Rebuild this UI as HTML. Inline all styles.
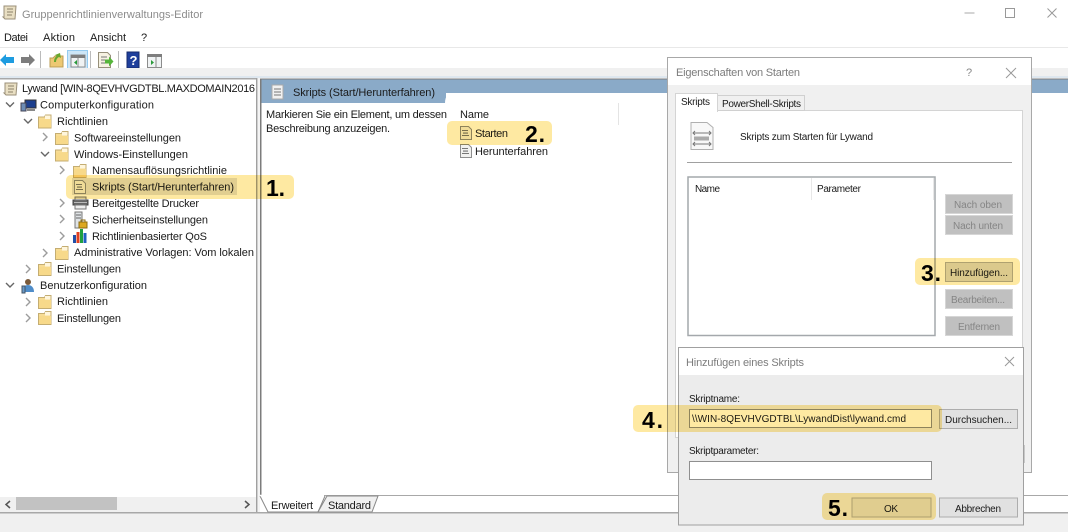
<!DOCTYPE html>
<html lang="de"><head><meta charset="utf-8"><title>Gruppenrichtlinienverwaltungs-Editor</title>
<style>
html,body{margin:0;padding:0;background:#fff;width:1068px;height:532px;overflow:hidden}
svg{display:block;filter:blur(.35px)}
text{font-family:"Liberation Sans",sans-serif;font-size:11px;fill:#1a1a1a;white-space:pre}
.d{font-size:10px}
.g{fill:#858585}
.n{font-weight:700;font-size:23px;fill:#000}
.c{fill:none;stroke:#9c9c9c;stroke-width:1.4}
.h{fill:#fee9a2;mix-blend-mode:multiply}
</style></head><body>
<svg width="1068" height="532" viewBox="0 0 1068 532" xmlns="http://www.w3.org/2000/svg">
<defs>
<g id="folder"><path d="M.5 2.500h6l1-2h5.500v13H.5z" fill="#f7dc94" stroke="#c4ad72"/><path d="M7 1h5.500v3.500H7z" fill="#fff6dc"/><path d="M1 5h12v8H1z" fill="#f7d98a"/></g>
<g id="script"><path d="M1.500.5h8l3 3v10h-11z" fill="#f1f1ef" stroke="#8e8e8e"/><path d="M3 4.500h6M3 9.500h7" stroke="#777"/><rect x="4" y="6.300" width="5" height="1.600" fill="#999"/></g>
<g id="chevR"><path d="M0 0l4 4-4 4" class="c"/></g>
<g id="chevD"><path d="M0 0l4 4 4-4" fill="none" stroke="#666" stroke-width="1.400"/></g>
</defs>

<rect width="1068" height="532" fill="#fff"/>
<!-- title -->
<path d="M4 6h12l-1 13H5l-2-2h1z" fill="#e9dfc3" stroke="#9a8f78"/><path d="M7 9h6M7 12h6M7 15h5" stroke="#8a8068"/>
<text x="22" y="18" textLength="181" style="fill:#8c8c8c">Gruppenrichtlinienverwaltungs-Editor</text>
<path d="M964.500 13h10" stroke="#aaa"/><rect x="1005.500" y="8.500" width="9" height="9" fill="none" stroke="#999"/><path d="M1047.500 8.500l9 9m0-9l-9 9" stroke="#999" fill="none"/>
<!-- menu -->
<text x="4" y="41" textLength="24">Datei</text>
<text x="43" y="41" textLength="32">Aktion</text>
<text x="90" y="41" textLength="36">Ansicht</text>
<text x="141" y="41" textLength="4">?</text>
<rect y="47" width="1068" height="1" fill="#e8e8e8"/>
<!-- toolbar -->
<path d="M0 60l6-6v3h8v6H6v3z" fill="#1e9ce0"/>
<path d="M35 60l-6-6v3h-8v6h8v3z" fill="#7d7d7d"/>
<rect x="40" y="51" width="1" height="17" fill="#bbb"/>
<path d="M50 58h3l2-2h8v11H50z" fill="#edc873" stroke="#bb9c55"/><path d="M54 62c0-3 1-5 3-6l-2-1 5-2 1 5-2-1c-2 1-3 3-3 5z" fill="#67a82e"/>
<rect x="67.500" y="50.500" width="20" height="18" fill="#cde6f7" stroke="#95cbf0"/>
<rect x="71" y="55" width="14" height="12" fill="#f0f3f4" stroke="#8c8c8c"/><rect x="71" y="55" width="14" height="3" fill="#7e7e7e"/><path d="M78 58v9" stroke="#888"/><path d="M77 60l-3 2.500 3 2.500z" fill="#2a9a3a"/>
<rect x="90" y="51" width="1" height="17" fill="#bbb"/>
<path d="M98.500 52.500h9l3 3v12h-12z" fill="#f6f2e2" stroke="#968f7a"/><path d="M101 57h6M101 60h4M101 63h4" stroke="#777"/><path d="M105 59.500h4v-3l4.500 5-4.500 5v-3h-4z" fill="#55b53a"/>
<rect x="118" y="51" width="1" height="17" fill="#bbb"/>
<rect x="127" y="52" width="12" height="16" fill="#1f3f9c" stroke="#152a6c"/><text x="129.500" y="65" style="font-size:13px;font-weight:700;fill:#fff">?</text>
<rect x="147.500" y="54.500" width="14" height="13" fill="#f0f3f4" stroke="#8c8c8c"/><rect x="147" y="54" width="15" height="3" fill="#7e7e7e"/><path d="M156 57v10" stroke="#888"/><path d="M151 60l3 2.500-3 2.500z" fill="#2a9a3a"/>
<rect y="68" width="1068" height="10" fill="#f0f0f0"/>
<rect y="76" width="1068" height="2" fill="#d6e3ee" opacity=".7"/>

<!-- left pane -->
<rect x="0" y="78" width="257" height="1.500" fill="#a8a8a8"/>
<rect x="256" y="78" width="1.500" height="435" fill="#a0a0a0"/>
<rect x="258" y="78" width="2" height="435" fill="#f4f4f4"/>
<!-- tree icons -->
<path d="M5 83h12l-1 12H6l-2-2h1z" fill="#e9dfc3" stroke="#9a8f78"/><path d="M8 86h6M8 89h6M8 92h5" stroke="#8a8068"/>
<g><rect x="25" y="100" width="11" height="8" fill="#1c3f8e" stroke="#333"/><rect x="21" y="103" width="5" height="8" fill="#6d8db5" stroke="#445"/><rect x="27" y="109" width="8" height="2" fill="#888"/></g>
<use href="#chevD" x="6" y="102.500"/>
<use href="#chevD" x="24" y="119"/>
<use href="#folder" x="38" y="114.500"/>
<text x="22" y="92" textLength="233">Lywand [WIN-8QEVHVGDTBL.MAXDOMAIN2016</text>
<text x="40" y="108.500" textLength="114">Computerkonfiguration</text>
<text x="57" y="125" textLength="51">Richtlinien</text>
<use href="#chevR" x="43" y="133"/>
<use href="#folder" x="55" y="131"/>
<text x="74" y="141.500" textLength="107">Softwareeinstellungen</text>
<use href="#chevD" x="41" y="152"/>
<use href="#folder" x="55" y="147.500"/>
<text x="74" y="158" textLength="114">Windows-Einstellungen</text>
<use href="#chevR" x="60" y="166"/>
<use href="#folder" x="73" y="164"/>
<text x="92" y="174" textLength="135">Namensauflösungsrichtlinie</text>
<rect x="72" y="178" width="165" height="17" fill="#e2e2e2"/>
<use href="#script" x="73" y="180"/>
<text x="92" y="190.500" textLength="142">Skripts (Start/Herunterfahren)</text>
<use href="#chevR" x="60" y="199"/>
<g><rect x="73" y="200" width="15" height="5" fill="#666" stroke="#444"/><rect x="75" y="197" width="11" height="3" fill="#ddd" stroke="#777"/><rect x="75" y="205" width="11" height="4" fill="#eee" stroke="#777"/><path d="M74 202.500h13" stroke="#bbb"/></g>
<text x="92" y="207" textLength="107">Bereitgestellte Drucker</text>
<use href="#chevR" x="60" y="215"/>
<g><rect x="75" y="212" width="7" height="16" fill="#dfe3e6" stroke="#777"/><path d="M76 215h5M76 218h5" stroke="#666"/><rect x="79" y="222" width="8" height="6" fill="#dca820" stroke="#8c6c10"/><path d="M81 222v-2h4v2" fill="none" stroke="#8c6c10"/></g>
<text x="92" y="223.500" textLength="116">Sicherheitseinstellungen</text>
<use href="#chevR" x="60" y="232"/>
<g><rect x="73" y="235" width="3" height="8" fill="#2050a8"/><rect x="76.500" y="232" width="3" height="11" fill="#e04020"/><rect x="80" y="229" width="3" height="14" fill="#20a040"/><rect x="83.500" y="233" width="3" height="10" fill="#2060c0"/></g>
<text x="92" y="240" textLength="115">Richtlinienbasierter QoS</text>
<use href="#chevR" x="43" y="249"/>
<use href="#folder" x="55" y="246"/>
<text x="74" y="256" textLength="180">Administrative Vorlagen: Vom lokalen</text>
<use href="#chevR" x="26" y="265"/>
<use href="#folder" x="38" y="262"/>
<text x="57" y="272.500" textLength="64">Einstellungen</text>
<use href="#chevD" x="6" y="283"/>
<g><circle cx="28" cy="282" r="3" fill="#7a5a3a"/><path d="M22 292c0-5 3-7 6-7s6 2 6 7z" fill="#4f8cc8"/><rect x="22" y="286" width="3" height="7" fill="#6a9ac8" stroke="#456"/></g>
<text x="40" y="289" textLength="107">Benutzerkonfiguration</text>
<use href="#chevR" x="26" y="298"/>
<use href="#folder" x="38" y="295"/>
<text x="57" y="305" textLength="51">Richtlinien</text>
<use href="#chevR" x="26" y="314"/>
<use href="#folder" x="38" y="311"/>
<text x="57" y="322" textLength="64">Einstellungen</text>
<!-- scrollbar -->
<rect x="0" y="497" width="256" height="15" fill="#f0f0f0"/>
<rect x="16" y="497" width="101" height="13" fill="#c2c2c2"/>
<path d="M10 501l-4 3.500 4 3.500" fill="none" stroke="#555" stroke-width="1.500"/>
<path d="M245 501l4 3.500-4 3.500" fill="none" stroke="#555" stroke-width="1.500"/>
<rect x="0" y="512" width="1068" height="1.500" fill="#a8a8a8"/>
<rect x="0" y="513.500" width="1068" height="19" fill="#f0f0f0"/>

<!-- right pane -->
<rect x="260" y="79" width="808" height="14" fill="#8aaac8"/>
<path d="M260 79h186v24H260z" fill="#8aaac8"/>
<rect x="260" y="79" width="1.500" height="417" fill="#7c7c7c"/>
<rect x="260" y="78.500" width="808" height="1" fill="#7c7c7c"/>
<path d="M445 103q0-10 9-10h6v10z" fill="#fff"/>
<rect x="454" y="93" width="614" height="402" fill="#fff"/>
<rect x="261.500" y="103" width="195" height="392" fill="#fff"/>
<rect x="260" y="495" width="808" height="1" fill="#a8a8a8"/>
<rect x="272" y="85" width="11" height="14" fill="#f1f1f1" stroke="#aaa"/><path d="M274 89h7M274 92h7M274 95h7" stroke="#777"/>
<text x="293" y="96" textLength="142">Skripts (Start/Herunterfahren)</text>
<text x="266" y="118" textLength="181">Markieren Sie ein Element, um dessen</text>
<text x="266" y="132" textLength="124">Beschreibung anzuzeigen.</text>
<text x="460" y="118" textLength="29">Name</text>
<rect x="618" y="103" width="1" height="22" fill="#e4e4e4"/>
<use href="#script" x="459" y="126"/>
<text x="475" y="137" textLength="33">Starten</text>
<use href="#script" x="459" y="144"/>
<text x="475" y="155" textLength="73">Herunterfahren</text>
<!-- bottom tabs -->
<path d="M260 496l8 16h50l7-16" fill="#fff" stroke="#888"/>
<path d="M318 512l9-16h51l-6 16z" fill="#f0f0f0" stroke="#888"/>
<path d="M260 495.500h64" stroke="#fff" stroke-width="1.500"/>
<text x="271" y="509" textLength="42">Erweitert</text>
<text x="328" y="509" textLength="43">Standard</text>

<!-- dialog 1 -->
<rect x="667.500" y="57.500" width="364" height="415" fill="#f0f0f0" stroke="#a8a8a8"/>
<rect x="668" y="58" width="363" height="27" fill="#fff"/>
<text x="676" y="76" textLength="124" style="fill:#7c7c7c">Eigenschaften von Starten</text>
<text x="966" y="76" style="fill:#888">?</text>
<path d="M1006 68l10 10m0-10l-10 10" stroke="#999" fill="none"/>
<rect x="675.500" y="110.500" width="347" height="327" fill="#fff" stroke="#d4d4d4"/>
<rect x="717.500" y="95.500" width="87" height="15" fill="#f0f0f0" stroke="#d0d0d0"/>
<rect x="675.500" y="93.500" width="42" height="18" fill="#fff" stroke="#d4d4d4"/>
<rect x="676" y="109" width="41" height="3" fill="#fff"/>
<text x="681" y="105" class="d" textLength="29">Skripts</text>
<text x="722" y="107" class="d" textLength="79">PowerShell-Skripts</text>
<path d="M691 122.500h16l6 5v22h-22z" fill="#f8f8f8" stroke="#b0b0b0"/>
<path d="M693 133h18M693 144h18" stroke="#777"/><path d="M695 131l-2 2 2 2M709 131l2 2-2 2M695 142l-2 2 2 2M709 142l2 2-2 2" fill="none" stroke="#777"/><rect x="694" y="136.500" width="15" height="4" fill="#aaa"/>
<text x="740" y="140" class="d" textLength="133">Skripts zum Starten für Lywand</text>
<rect x="687" y="162" width="325" height="1" fill="#a0a0a0"/>
<rect x="688" y="177" width="247" height="158.500" fill="#fff" stroke="#a4a8ac" stroke-width="1.500"/>
<rect x="811" y="178" width="1" height="22" fill="#e8e8e8"/>
<rect x="933" y="178" width="1" height="22" fill="#e8e8e8"/>
<text x="695" y="192" class="d" textLength="25">Name</text>
<text x="817" y="192" class="d" textLength="44">Parameter</text>
<g fill="#c0c0c0" stroke="#d6d6d6">
<rect x="945.500" y="194.500" width="67" height="19"/>
<rect x="945.500" y="215.500" width="67" height="19"/>
<rect x="945.500" y="262.500" width="67" height="19" fill="#dcdcdc" stroke="#b0b0b0"/>
<rect x="945.500" y="289.500" width="67" height="19"/>
<rect x="945.500" y="316.500" width="67" height="19"/>
</g>
<text x="954" y="208" class="d g" textLength="48">Nach oben</text>
<text x="953" y="229" class="d g" textLength="50">Nach unten</text>
<text x="950" y="276" class="d" textLength="58">Hinzufügen...</text>
<text x="951" y="303" class="d g" textLength="54">Bearbeiten...</text>
<text x="958" y="330" class="d g" textLength="42">Entfernen</text>

<!-- dialog 2 -->
<rect x="1022" y="445" width="3" height="18" fill="#c8c8c8"/>
<rect x="678.500" y="347.500" width="345" height="177.500" fill="#ececec" stroke="#a0a0a0"/>
<rect x="679" y="348" width="344" height="27" fill="#fff"/>
<text x="686" y="366" textLength="118" style="fill:#7c7c7c">Hinzufügen eines Skripts</text>
<path d="M1005 357l9 9m0-9l-9 9" stroke="#999" fill="none"/>
<text x="689" y="402" class="d" textLength="51">Skriptname:</text>
<rect x="689.500" y="409.500" width="242" height="18" fill="#fff" stroke="#8f8f8f"/>
<text x="692" y="422" class="d" textLength="214">\\WIN-8QEVHVGDTBL\LywandDist\lywand.cmd</text>
<rect x="939.500" y="409.500" width="78" height="19" fill="#e1e1e1" stroke="#adadad"/>
<text x="945" y="423" class="d" textLength="67">Durchsuchen...</text>
<text x="689" y="454" class="d" textLength="70">Skriptparameter:</text>
<rect x="689.500" y="461.500" width="242" height="18" fill="#fff" stroke="#8f8f8f"/>
<rect x="852" y="498" width="79" height="19" fill="#e1e1e1" stroke="#adadad"/>
<text x="884" y="512" class="d" textLength="14">OK</text>
<rect x="939.500" y="498" width="78" height="19" fill="#e1e1e1" stroke="#adadad"/>
<text x="955" y="512" class="d" textLength="46">Abbrechen</text>

<!-- highlights -->
<rect class="h" x="66" y="175" width="228" height="24" rx="5"/>
<rect class="h" x="447" y="121" width="105" height="24" rx="5"/>
<rect class="h" x="915" y="258" width="105" height="27" rx="5"/>
<rect class="h" x="633" y="405" width="309" height="27" rx="5"/>
<rect class="h" x="822" y="493" width="114" height="27" rx="5"/>
<text x="266" y="196" class="n" textLength="19">1.</text>
<text x="525" y="142" class="n" textLength="20">2.</text>
<text x="921" y="281" class="n" textLength="20">3.</text>
<text x="642" y="428" class="n" textLength="21">4.</text>
<text x="828" y="516" class="n" textLength="20">5.</text>
</svg>
</body></html>
